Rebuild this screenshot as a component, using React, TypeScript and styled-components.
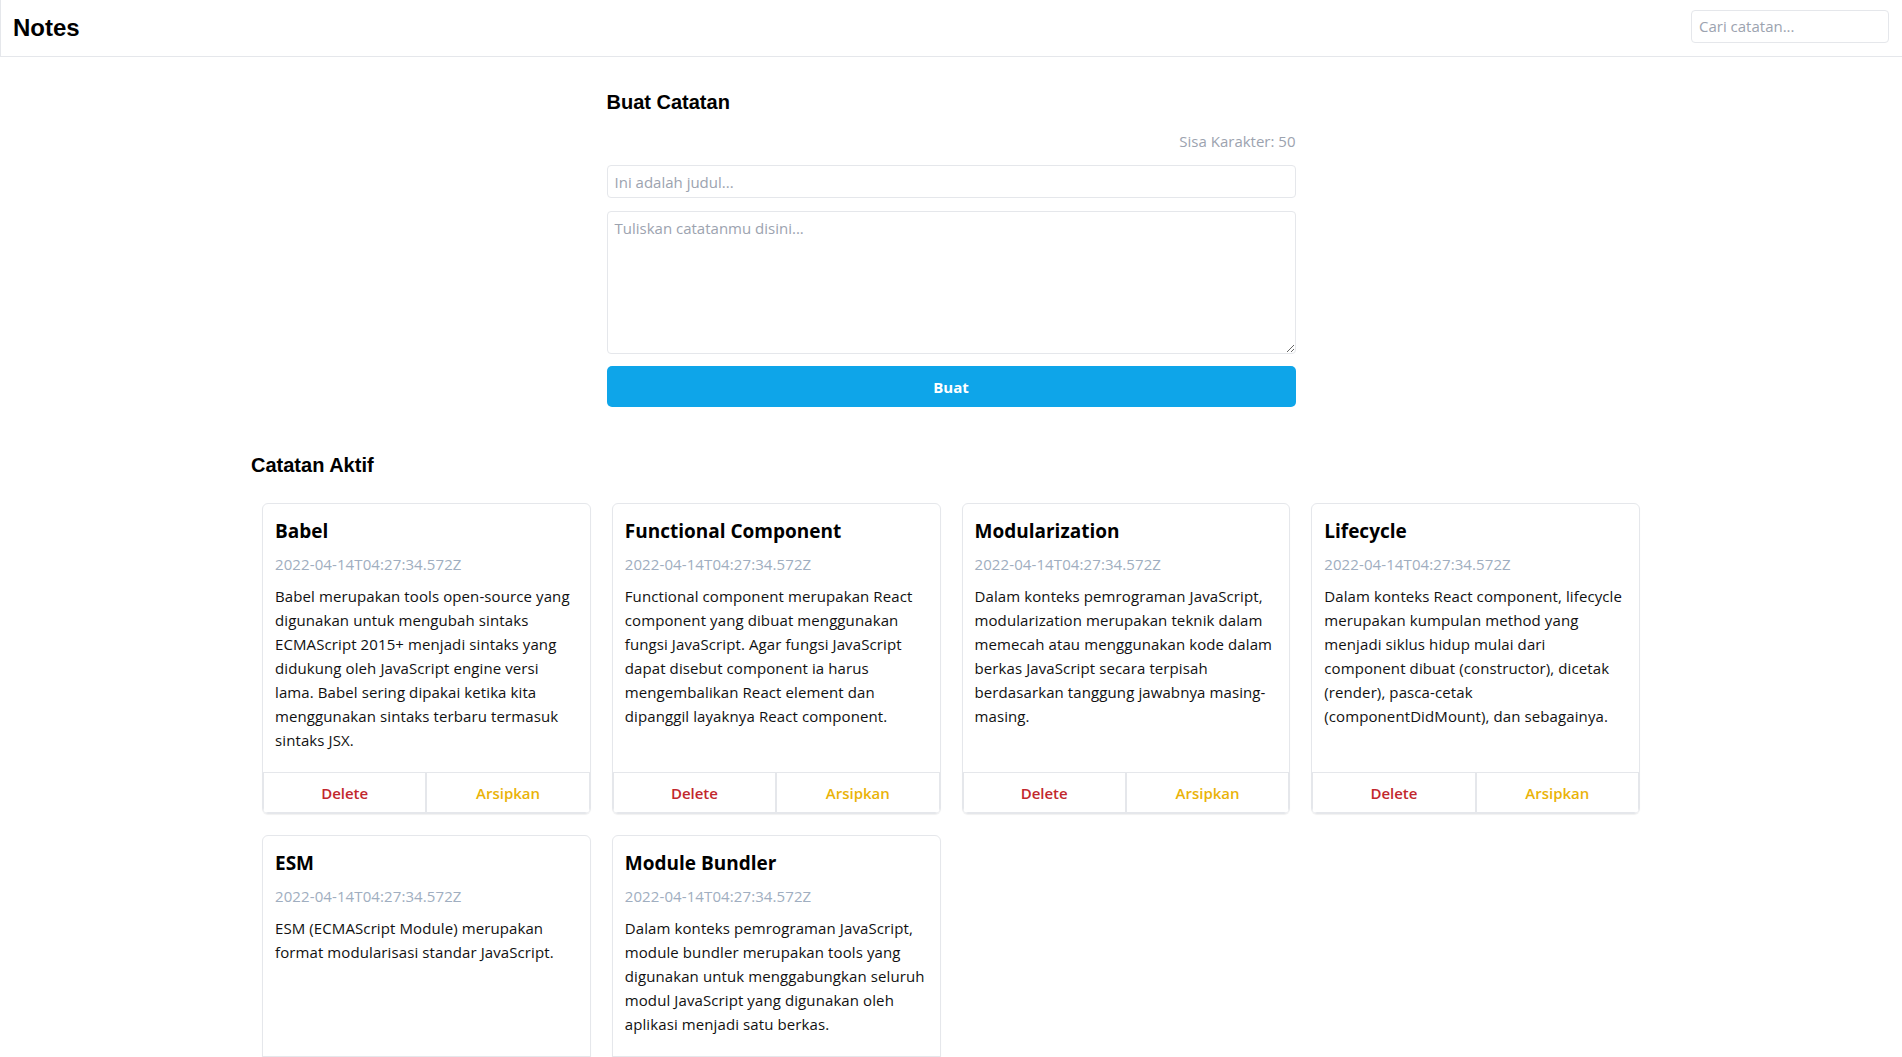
import React, { useState } from 'react';
import styled, { createGlobalStyle } from 'styled-components';

type Note = {
  id: number;
  title: string;
  body: string;
  createdAt: string;
  archived: boolean;
};

const initialNotes: Note[] = [
  {
    id: 1,
    title: 'Babel',
    body: 'Babel merupakan tools open-source yang digunakan untuk mengubah sintaks ECMAScript 2015+ menjadi sintaks yang didukung oleh JavaScript engine versi lama. Babel sering dipakai ketika kita menggunakan sintaks terbaru termasuk sintaks JSX.',
    createdAt: '2022-04-14T04:27:34.572Z',
    archived: false
  },
  {
    id: 2,
    title: 'Functional Component',
    body: 'Functional component merupakan React component yang dibuat menggunakan fungsi JavaScript. Agar fungsi JavaScript dapat disebut component ia harus mengembalikan React element dan dipanggil layaknya React component.',
    createdAt: '2022-04-14T04:27:34.572Z',
    archived: false
  },
  {
    id: 3,
    title: 'Modularization',
    body: 'Dalam konteks pemrograman JavaScript, modularization merupakan teknik dalam memecah atau menggunakan kode dalam berkas JavaScript secara terpisah berdasarkan tanggung jawabnya masing-masing.',
    createdAt: '2022-04-14T04:27:34.572Z',
    archived: false
  },
  {
    id: 4,
    title: 'Lifecycle',
    body: 'Dalam konteks React component, lifecycle merupakan kumpulan method yang menjadi siklus hidup mulai dari component dibuat (constructor), dicetak (render), pasca-cetak (componentDidMount), dan sebagainya.',
    createdAt: '2022-04-14T04:27:34.572Z',
    archived: false
  },
  {
    id: 5,
    title: 'ESM',
    body: 'ESM (ECMAScript Module) merupakan format modularisasi standar JavaScript.',
    createdAt: '2022-04-14T04:27:34.572Z',
    archived: false
  },
  {
    id: 6,
    title: 'Module Bundler',
    body: 'Dalam konteks pemrograman JavaScript, module bundler merupakan tools yang digunakan untuk menggabungkan seluruh modul JavaScript yang digunakan oleh aplikasi menjadi satu berkas.',
    createdAt: '2022-04-14T04:27:34.572Z',
    archived: false
  }
];

const MAX_TITLE = 50;

function App() {
  const [notes, setNotes] = useState<Note[]>(initialNotes);
  const [title, setTitle] = useState('');
  const [body, setBody] = useState('');
  const [search, setSearch] = useState('');

  // tambah catatan
  const addNote = (e: React.FormEvent) => {
    e.preventDefault();
    if (!title.trim()) return;
    setNotes([
      ...notes,
      { id: Date.now(), title, body, createdAt: new Date().toISOString(), archived: false }
    ]);
    setTitle('');
    setBody('');
  };

  const deleteNote = (id: number) => setNotes(notes.filter((n) => n.id !== id));

  const archiveNote = (id: number) =>
    setNotes(notes.map((n) => (n.id === id ? { ...n, archived: !n.archived } : n)));

  const activeNotes = notes.filter(
    (n) => !n.archived && n.title.toLowerCase().includes(search.toLowerCase())
  );

  return (
    <>
      <GlobalStyle />
      <Header>
        <Brand>Notes</Brand>
        <SearchInput
          placeholder="Cari catatan..."
          value={search}
          onChange={(e) => setSearch(e.target.value)}
        />
      </Header>
      <Main>
        <Form onSubmit={addNote}>
          <SectionTitle>Buat Catatan</SectionTitle>
          <CharLeft>Sisa Karakter: {MAX_TITLE - title.length}</CharLeft>
          <TitleInput
            placeholder="Ini adalah judul..."
            value={title}
            onChange={(e) => setTitle(e.target.value.slice(0, MAX_TITLE))}
          />
          <BodyInput
            placeholder="Tuliskan catatanmu disini..."
            value={body}
            onChange={(e) => setBody(e.target.value)}
          />
          <SubmitBtn type="submit">Buat</SubmitBtn>
        </Form>

        <ListSection>
          <SectionTitle>Catatan Aktif</SectionTitle>
          <NoteGrid>
            {activeNotes.map((note) => (
              <Card key={note.id}>
                <CardBody>
                  <CardTitle>{note.title}</CardTitle>
                  <CardDate>{note.createdAt}</CardDate>
                  <CardText>{note.body}</CardText>
                </CardBody>
                <CardActions>
                  <ActionBtn $tone="delete" onClick={() => deleteNote(note.id)}>
                    Delete
                  </ActionBtn>
                  <ActionBtn $tone="archive" onClick={() => archiveNote(note.id)}>
                    Arsipkan
                  </ActionBtn>
                </CardActions>
              </Card>
            ))}
          </NoteGrid>
        </ListSection>
      </Main>
    </>
  );
}

export default App;

const GlobalStyle = createGlobalStyle`
  * {
    box-sizing: border-box;
  }
  body {
    margin: 0;
    background: #fff;
    color: #111;
    font-family: "Open Sans", "Noto Sans", sans-serif;
  }
`;

const Header = styled.header`
  display: flex;
  align-items: center;
  justify-content: space-between;
  height: 57px;
  padding: 0 13px 0 12px;
  border-left: 1px solid #e5e7eb;
  border-bottom: 1px solid #e5e7eb;
`;

const Brand = styled.h1`
  margin: 0;
  font-family: "Liberation Sans", Arial, sans-serif;
  font-size: 24px;
  font-weight: bold;
  color: #000;
`;

const SearchInput = styled.input`
  width: 198px;
  height: 33px;
  margin-bottom: 4px;
  padding: 0 7px;
  border: 1px solid #e5e7eb;
  border-radius: 4px;
  font-family: "Open Sans", sans-serif;
  font-size: 15px;
  outline: none;
  &::placeholder {
    color: #9ca3af;
  }
`;

const Main = styled.main`
  padding: 33px 0 40px;
`;

const Form = styled.form`
  max-width: 689px;
  margin: 0 auto;
  display: flex;
  flex-direction: column;
`;

const SectionTitle = styled.h2`
  margin: 0;
  font-family: "Liberation Sans", Arial, sans-serif;
  font-size: 20px;
  line-height: 24px;
  font-weight: bold;
  color: #000;
`;

const CharLeft = styled.p`
  margin: 17px 0 13px;
  text-align: right;
  font-size: 15px;
  line-height: 21px;
  color: #9ca3af;
`;

const fieldCss = `
  width: 100%;
  border: 1px solid #e5e7eb;
  border-radius: 4px;
  padding: 6px 7px;
  font-family: "Open Sans", sans-serif;
  font-size: 15px;
  color: #111;
  outline: none;
  &::placeholder {
    color: #9ca3af;
  }
`;

const TitleInput = styled.input`
  ${fieldCss}
  height: 33px;
`;

const BodyInput = styled.textarea`
  ${fieldCss}
  height: 143px;
  margin-top: 13px;
  resize: vertical;
`;

const SubmitBtn = styled.button`
  margin-top: 12px;
  height: 41px;
  border: none;
  border-radius: 5px;
  background: #0ea5e9;
  color: #fff;
  font-family: "Open Sans", sans-serif;
  font-size: 15px;
  font-weight: 700;
  cursor: pointer;
`;

const ListSection = styled.section`
  max-width: 1400px;
  margin: 46px auto 0;
`;

const NoteGrid = styled.div`
  display: grid;
  grid-template-columns: repeat(4, 1fr);
  gap: 21px 21px;
  padding: 0 11px;
  margin-top: 26px;
`;

const Card = styled.div`
  display: flex;
  flex-direction: column;
  border: 1px solid #e5e7eb;
  border-radius: 6px;
  box-shadow: 0 1px 1px rgba(0, 0, 0, 0.06);
  overflow: hidden;
`;

const CardBody = styled.div`
  padding: 12px 12px 12px;
  flex: 1;
`;

const CardTitle = styled.h3`
  margin: 0 0 8px;
  font-size: 19px;
  line-height: 30px;
  font-weight: 700;
  color: #000;
`;

const CardDate = styled.p`
  margin: 0 0 9px;
  font-size: 15px;
  line-height: 21px;
  letter-spacing: 0.1px;
  color: #a0aec0;
`;

const CardText = styled.p`
  margin: 0 0 8px;
  font-size: 15px;
  line-height: 24px;
  letter-spacing: 0.1px;
  color: #111;
`;

const CardActions = styled.div`
  display: flex;
`;

const ActionBtn = styled.button<{ $tone: 'delete' | 'archive' }>`
  flex: 1;
  height: 41px;
  background: #fff;
  border: 1px solid #e5e7eb;
  font-family: "Open Sans", sans-serif;
  font-size: 15px;
  font-weight: 600;
  color: ${(p) => (p.$tone === 'delete' ? '#c2272d' : '#eab308')};
  cursor: pointer;
`;
